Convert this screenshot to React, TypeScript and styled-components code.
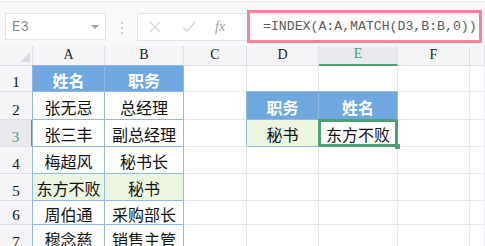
import React from "react";
import styled, { createGlobalStyle, css } from "styled-components";

const GlobalStyle = createGlobalStyle`
  html, body {
    margin: 0;
    padding: 0;
    background: #ffffff;
    overflow: hidden;
  }
`;

const CJK = `"Noto Sans CJK SC", "Noto Sans", sans-serif`;
const ASCII = `"Liberation Serif", "Noto Sans CJK SC", serif`;

const GRID_LINE = "#e6e6ec";
const TABLE_LINE = "#8fb8e3";
const GREEN = "#4f9e74";

const Page = styled.div`
  width: 485px;
  height: 246px;
  overflow: hidden;
  background: #ffffff;
`;

const Toolbar = styled.div`
  height: 45px;
  margin-top: 1px;
  border-top: 1px solid #ececf0;
  background: #f9f9fb;
  display: flex;
  align-items: flex-start;
  padding-left: 5px;
  box-sizing: border-box;
`;

const NameBox = styled.div`
  margin-top: 11px;
  width: 101px;
  height: 27px;
  box-sizing: border-box;
  border: 1px solid #e2e2e8;
  background: #ffffff;
  display: flex;
  align-items: center;
  justify-content: space-between;
  padding: 0 6px 0 6px;
  font-family: "Liberation Mono", monospace;
  font-size: 14px;
  color: #8a8a90;
`;

const Caret = styled.span`
  width: 0;
  height: 0;
  border-left: 4px solid transparent;
  border-right: 4px solid transparent;
  border-top: 4px solid #a0a0a8;
`;

const Dots = styled.div`
  margin: 20px 14px 0 15px;
  display: flex;
  flex-direction: column;
  gap: 3px;
  span {
    width: 2px;
    height: 2px;
    background: #d0d0d6;
  }
`;

const IconBox = styled.div`
  margin-top: 11px;
  width: 112px;
  height: 28px;
  box-sizing: border-box;
  border: 1px solid #e2e2e8;
  border-right: none;
  background: #ffffff;
  display: flex;
  align-items: center;
  padding-left: 11px;
  gap: 21px;
  color: #d6d6dc;
`;

const Fx = styled.span`
  font-family: "Liberation Serif", serif;
  font-style: italic;
  font-size: 14px;
  color: #9c9ca6;
  margin-left: -2px;
`;

const FormulaInput = styled.div`
  margin-top: 8px;
  margin-left: -2px;
  width: 235px;
  height: 33px;
  box-sizing: border-box;
  border: 3px solid #f4839a;
  background: #ffffff;
  display: flex;
  align-items: center;
  padding-left: 13px;
  font-family: "Liberation Mono", monospace;
  font-size: 13.2px;
  color: #5a5a60;
  white-space: nowrap;
`;

const Sheet = styled.div`
  display: grid;
  grid-template-columns: 33px 72px 79px 63px 72px 79px 72px 1fr;
  grid-template-rows: 20px 26px 28px 27px 27px 27px 24px 27px;
`;

type CellProps = {
  $kind?: "plain" | "head" | "data" | "hit";
  $sel?: boolean;
};

const Cell = styled.div<CellProps>`
  position: relative;
  box-sizing: border-box;
  border-right: 1px solid ${GRID_LINE};
  border-bottom: 1px solid ${GRID_LINE};
  display: flex;
  align-items: center;
  justify-content: center;
  padding-top: 2px;
  font-family: ${CJK};
  font-size: 16px;
  color: #111111;
  ${(p) =>
    p.$kind && p.$kind !== "plain" &&
    css`
      border-right-color: ${TABLE_LINE};
      border-bottom-color: ${TABLE_LINE};
      box-shadow: -1px -1px 0 0 ${TABLE_LINE};
    `}
  ${(p) =>
    p.$kind === "head" &&
    css`
      background: #6fa7df;
      color: #ffffff;
      font-weight: 700;
    `}
  ${(p) =>
    p.$kind === "hit" &&
    css`
      background: #ebf5e0;
    `}
  ${(p) =>
    p.$sel &&
    css`
      z-index: 2;
      box-shadow: inset 0 0 0 2px ${GREEN}, -1px -1px 0 0 ${GREEN};
      border-right-color: ${GREEN};
      border-bottom-color: ${GREEN};
      &::after {
        content: "";
        position: absolute;
        right: -3px;
        bottom: -3px;
        width: 5px;
        height: 5px;
        background: ${GREEN};
      }
    `}
`;

const ColHead = styled.div<{ $active?: boolean }>`
  box-sizing: border-box;
  background: ${(p) => (p.$active ? "#e9e9ee" : "#f5f5f8")};
  border-right: 1px solid #dedee4;
  border-bottom: ${(p) => (p.$active ? `2px solid ${GREEN}` : "1px solid #dedee4")};
  display: flex;
  align-items: flex-end;
  justify-content: center;
  padding-bottom: 2px;
  font-family: ${ASCII};
  font-size: 14px;
  color: ${(p) => (p.$active ? GREEN : "#222222")};
`;

const Corner = styled(ColHead)`
  position: relative;
  &::after {
    content: "";
    position: absolute;
    right: 2px;
    bottom: 3px;
    width: 0;
    height: 0;
    border-left: 10px solid transparent;
    border-bottom: 10px solid #dcdce2;
  }
`;

const RowHead = styled.div<{ $active?: boolean }>`
  box-sizing: border-box;
  background: ${(p) => (p.$active ? "#e9e9ee" : "#f5f5f8")};
  border-right: ${(p) => (p.$active ? `2px solid ${GREEN}` : "1px solid #dedee4")};
  border-bottom: 1px solid #dedee4;
  display: flex;
  align-items: flex-end;
  justify-content: center;
  font-family: ${ASCII};
  font-size: 15px;
  color: ${(p) => (p.$active ? GREEN : "#111111")};
`;

const letters = ["A", "B", "C", "D", "E", "F", ""];

type RowSpec = {
  a: string;
  b: string;
  aKind: CellProps["$kind"];
  d?: string;
  e?: string;
  dKind?: CellProps["$kind"];
  eSel?: boolean;
};

const rows: RowSpec[] = [
  { a: "姓名", b: "职务", aKind: "head" },
  { a: "张无忌", b: "总经理", aKind: "data", d: "职务", e: "姓名", dKind: "head" },
  { a: "张三丰", b: "副总经理", aKind: "data", d: "秘书", e: "东方不败", dKind: "hit", eSel: true },
  { a: "梅超风", b: "秘书长", aKind: "data" },
  { a: "东方不败", b: "秘书", aKind: "hit" },
  { a: "周伯通", b: "采购部长", aKind: "data" },
  { a: "穆念慈", b: "销售主管", aKind: "data" },
  { a: "", b: "", aKind: "plain" },
];

export default function App() {
  return (
    <Page>
      <GlobalStyle />
      <Toolbar>
        <NameBox>
          E3
          <Caret />
        </NameBox>
        <Dots>
          <span />
          <span />
          <span />
        </Dots>
        <IconBox>
          <svg width="12" height="12" viewBox="0 0 12 12">
            <path d="M1 1 L11 11 M11 1 L1 11" stroke="#d8d8de" strokeWidth="1.3" fill="none" />
          </svg>
          <svg width="14" height="12" viewBox="0 0 14 12">
            <path d="M1 6 L5 10 L13 1" stroke="#d8d8de" strokeWidth="1.6" fill="none" />
          </svg>
          <Fx>fx</Fx>
        </IconBox>
        <FormulaInput>=INDEX(A:A,MATCH(D3,B:B,0))</FormulaInput>
      </Toolbar>
      <Sheet>
        <Corner />
        {letters.map((l, i) => (
          <ColHead key={i} $active={l === "E"}>
            {l}
          </ColHead>
        ))}
        {rows.map((r, i) => {
          const n = i + 1;
          const inSecond = r.dKind !== undefined;
          return (
            <React.Fragment key={n}>
              <RowHead $active={n === 3}>{n}</RowHead>
              <Cell $kind={r.aKind}>{r.a}</Cell>
              <Cell $kind={r.aKind}>{r.b}</Cell>
              <Cell />
              <Cell $kind={inSecond ? r.dKind : "plain"}>{r.d}</Cell>
              <Cell $kind={inSecond ? (r.eSel ? "data" : r.dKind) : "plain"} $sel={r.eSel}>
                {r.e}
              </Cell>
              <Cell />
              <Cell />
            </React.Fragment>
          );
        })}
      </Sheet>
    </Page>
  );
}
